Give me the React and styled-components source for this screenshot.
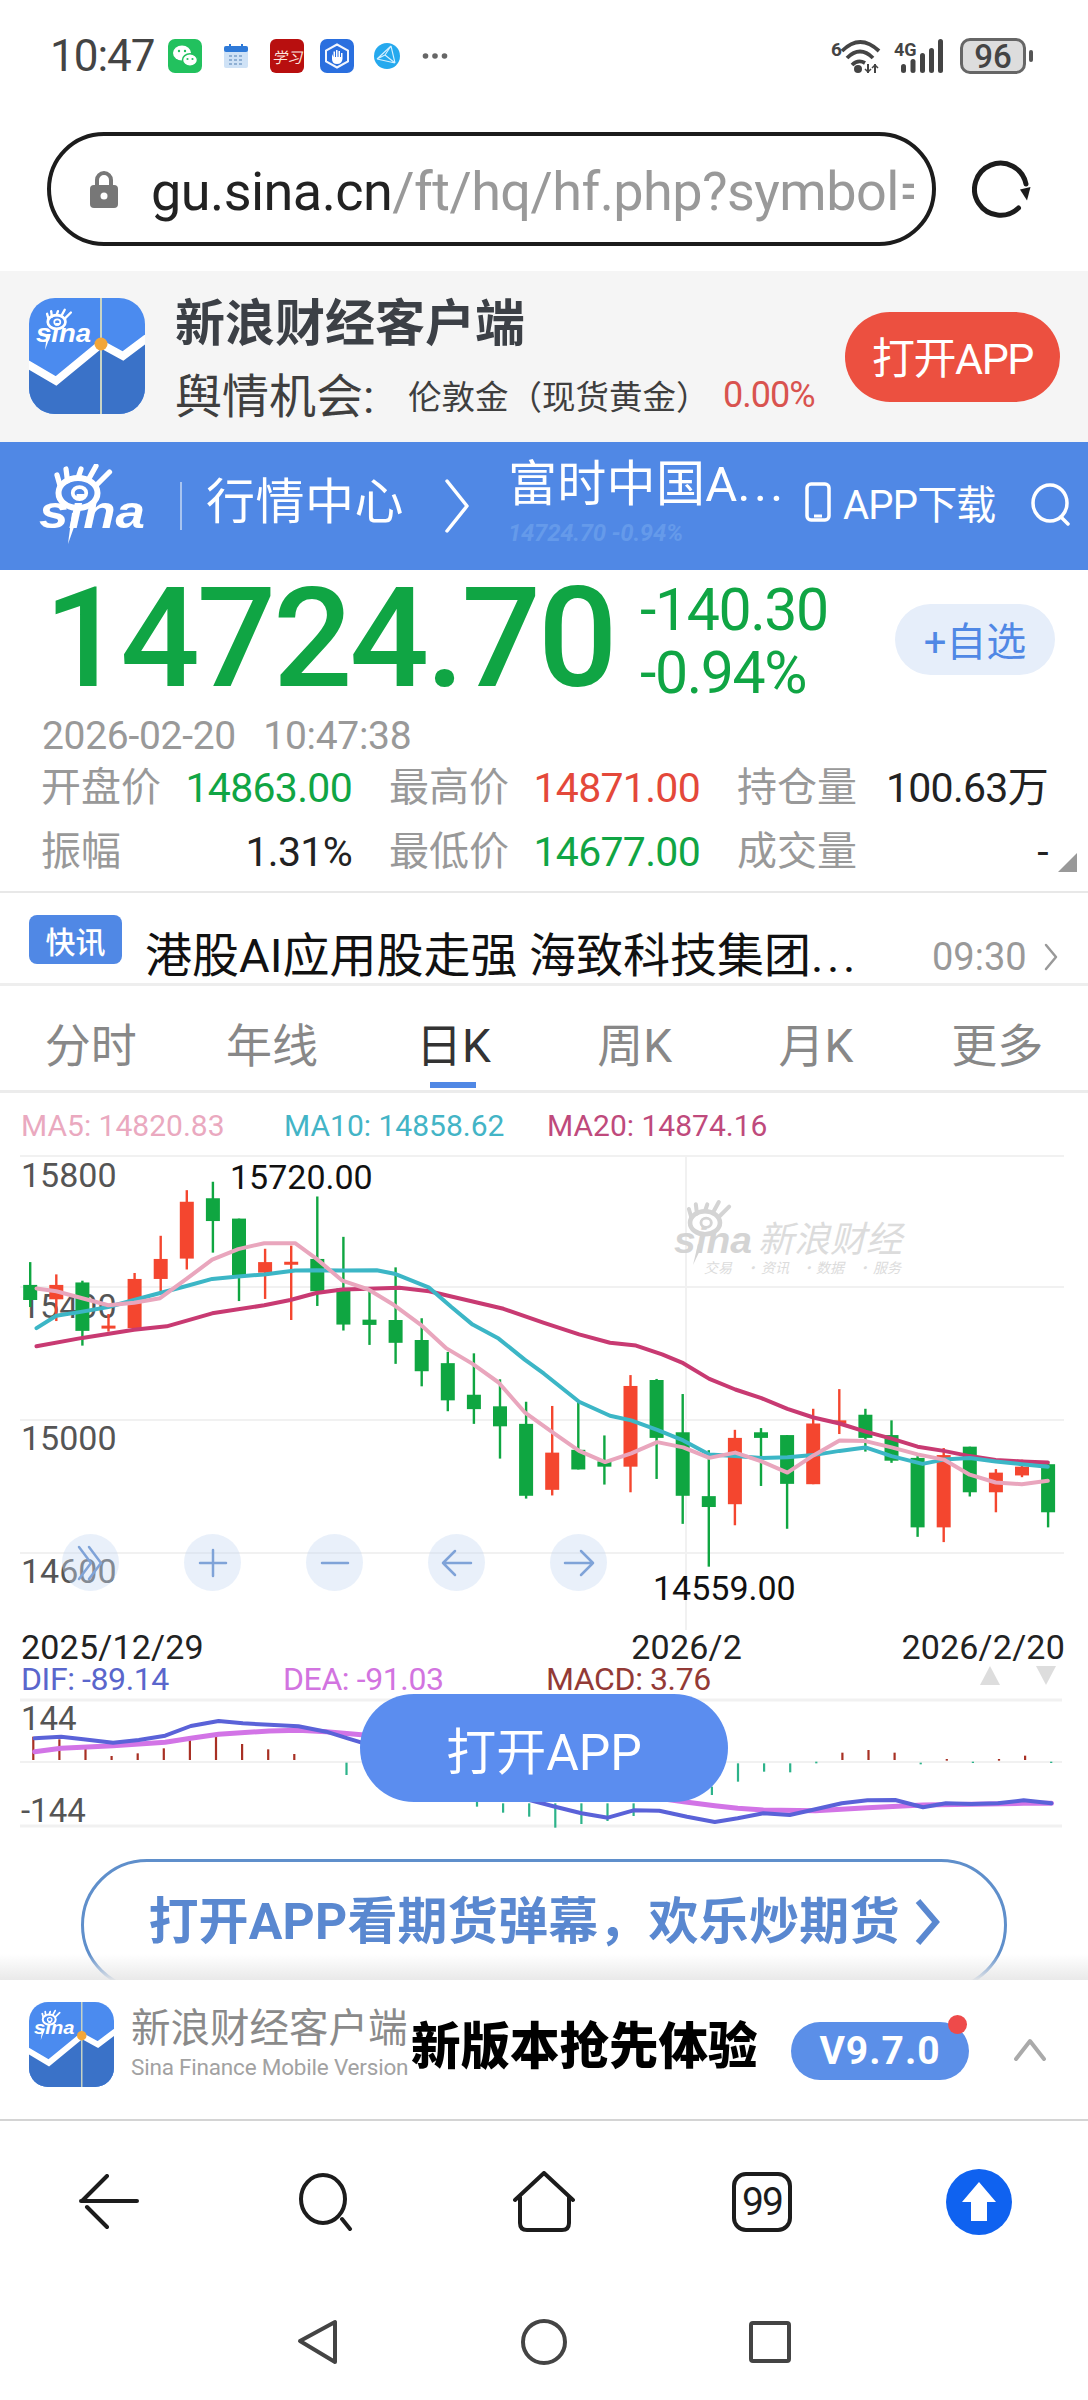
import React from "react";
import styled, { createGlobalStyle } from "styled-components";

const FONT = `Roboto, "Noto Sans CJK SC", "Noto Sans", sans-serif`;
const GREEN = "#10a544";
const RED = "#e4483a";
const BLUE = "#5088e5";

const Global = createGlobalStyle`
  html, body { margin: 0; padding: 0; background: #fff; }
  body { font-family: ${FONT}; }
  * { box-sizing: border-box; }
`;

const Page = styled.div`
  width: 1088px; height: 2400px; overflow: hidden; background: #fff;
  display: flex; flex-direction: column; color: #222;
`;

/* status bar */
const StatusBar = styled.div`
  height: 110px; display: flex; align-items: center; padding: 2px 62px 0 50px; flex: none;
`;
const Clock = styled.div`
  font-size: 44px; letter-spacing: -1px; color: #444; width: 118px; line-height: 1;
`;
const StatusIcons = styled.div`display: flex; align-items: center; gap: 16px;`;
const StatusRight = styled.div`margin-left: auto; display: flex; align-items: center; gap: 13px;`;
const Battery = styled.div`
  width: 66px; height: 36px; border: 3px solid #666; border-radius: 10px; background: #ddd; margin-left: 3px;
  font-size: 33px; line-height: 1; font-weight: 500; color: #444; display: flex; align-items: center; justify-content: center;
  position: relative;
  &::after { content: ""; position: absolute; right: -10px; top: 9px; width: 4px; height: 12px; border-radius: 2px; background: #555; }
`;

/* url */
const UrlRow = styled.div`
  height: 161px; padding: 22px 0 0 47px; display: flex; align-items: flex-start; flex: none;
`;
const UrlBox = styled.div`
  width: 889px; height: 114px; border: 4px solid #1c1c1c; border-radius: 57px; padding: 0 18px 0 39px;
  display: flex; align-items: center; gap: 33px; overflow: hidden;
`;
const UrlText = styled.div`
  font-size: 54px; letter-spacing: -0.55px; white-space: nowrap; overflow: hidden; color: #222; flex: 1; line-height: 76px; padding-top: 6px;
  span { color: #999; }
`;
const Reload = styled.div`margin: 26px 0 0 36px; width: 60px; height: 60px;`;

/* banner */
const Banner = styled.div`
  height: 171px; background: #f5f5f5; flex: none; display: flex; padding: 27px 28px 0 29px; 
`;
const BannerText = styled.div`margin-left: 30px; display: flex; flex-direction: column; flex: 1;`;
const BannerTitle = styled.div`font-size: 50px; font-weight: 700; line-height: 52px; color: #3c4046;`;
const BannerSub = styled.div`display: flex; align-items: center; margin-top: 15px; height: 54px; color: #3f3f3f;`;
const SubLead = styled.span`font-size: 47px; width: 233px; white-space: nowrap;`;
const SubGold = styled.span`font-size: 33.5px; width: 315px; white-space: nowrap; margin-top: 5px;`;
const SubPct = styled.span`font-size: 36px; color: #d9534f; letter-spacing: -1px; margin-top: 5px;`;
const OpenBtn = styled.div`
  width: 215px; height: 90px; margin-top: 14px; border-radius: 45px; background: #ec5040; color: #fff;
  font-size: 43px; display: flex; align-items: center; justify-content: center; letter-spacing: -1.5px; padding-bottom: 4px;
`;

/* nav */
const Nav = styled.div`
  height: 128px; background: ${BLUE}; flex: none; display: flex; align-items: center; color: #fff; padding-left: 38px; position: relative;
`;
const NavDivider = styled.div`width: 2px; height: 48px; background: #a8c4f0; margin: 0 24px 0 34px;`;
const NavSection = styled.div`font-size: 49px; width: 238px; line-height: 1; letter-spacing: 0.5px; margin-bottom: 8px;`;
const NavTitleBlock = styled.div`margin-left: 38px; width: 297px; display: flex; flex-direction: column; align-self: flex-start; padding-top: 12px;`;
const NavTitle = styled.div`font-size: 49px; line-height: 62px; white-space: nowrap; letter-spacing: 0.3px;`;
const Dots = styled.span`letter-spacing: 3.5px;`;
const NavFaint = styled.div`font-size: 24px; line-height: 26px; color: #659aea; font-style: italic; font-weight: 700; margin-top: 4px; letter-spacing: -0.3px; white-space: nowrap;`;
const NavDown = styled.div`display: flex; align-items: center; gap: 12px; font-size: 40px; letter-spacing: -0.8px; margin-bottom: 8px; white-space: nowrap;`;
const NavSearch = styled.div`margin-left: 34px;`;

/* quote */
const Quote = styled.div`height: 323px; flex: none; border-bottom: 2px solid #e8e8e8;`;
const PriceRow = styled.div`height: 146px; display: flex; align-items: center; padding: 0 33px 10px 44px;`;
const BigPrice = styled.div`font-size: 140px; line-height: 1; font-weight: 500; color: ${GREEN}; letter-spacing: -3.2px; width: 596px; white-space: nowrap;`;
const Change = styled.div`font-size: 59px; color: ${GREEN}; line-height: 63px; letter-spacing: -1.4px; white-space: nowrap; padding-top: 6px;`;
const Follow = styled.div`
  margin-left: auto; width: 160px; height: 71px; border-radius: 36px; background: #e6eefa; color: ${BLUE};
  font-size: 40px; display: flex; align-items: center; justify-content: center; margin-top: 2px;
`;
const DateLine = styled.div`height: 40px; padding-left: 42px; font-size: 39px; line-height: 40px; color: #999; letter-spacing: -0.3px; word-spacing: 18px;`;
const StatGrid = styled.div`display: grid; grid-template-columns: repeat(3, 311px); column-gap: 37px; grid-auto-rows: 64px; padding-left: 41px; position: relative;`;
const Stat = styled.div`display: flex; align-items: center; justify-content: space-between; font-size: 40px; line-height: 48px; color: #999; white-space: nowrap;`;
const StatVal = styled.span`font-size: 41px; letter-spacing: -0.7px; color: ${(p) => p.$c || "#222"};`;
const Corner = styled.div`
  position: absolute; right: 11px; bottom: 12px; width: 0; height: 0;
  border-left: 19px solid transparent; border-bottom: 19px solid #999;
`;

/* news */
const News = styled.div`height: 93px; flex: none; display: flex; padding: 22px 25px 0 29px; border-bottom: 3px solid #eee;`;
const NewsBadge = styled.div`width: 93px; height: 49px; border-radius: 8px; background: ${BLUE}; color: #fff; font-size: 30px; font-weight: 500; display: flex; align-items: center; justify-content: center; flex: none;`;
const NewsText = styled.div`margin: 11px 0 0 23px; font-size: 47px; line-height: 60px; color: #111; width: 787px; white-space: nowrap;`;
const NewsTime = styled.div`margin-top: 12px; font-size: 38px; line-height: 60px; color: #999;`;
const NewsMore = styled.div`margin: 28px 0 0 17px;`;

/* tabs */
const Tabs = styled.div`height: 107px; flex: none; display: grid; grid-template-columns: repeat(6, 1fr); border-bottom: 3px solid #ececec;`;
const Tab = styled.div`
  display: flex; align-items: center; justify-content: center; padding-top: 8px; font-size: 46px; color: ${(p) => (p.$on ? "#333" : "#888")}; position: relative;
  ${(p) => p.$on && `&::after { content: ""; position: absolute; left: 50%; margin-left: -23px; bottom: 2px; width: 46px; height: 6px; background: ${BLUE}; }`}
`;

/* chart */
const ChartArea = styled.div`position: relative; flex: none; height: 747px;`;
const MaLegend = styled.div`height: 57px; display: flex; padding: 16px 0 0 21px; font-size: 30px; line-height: 34px; white-space: nowrap;`;
const MaItem = styled.span`width: ${(p) => p.$w}px; color: ${(p) => p.$c};`;
const ChartSvg = styled.svg`display: block;`;
const DateAxis = styled.div`height: 35px; display: flex; justify-content: space-between; padding: 0 23px 0 21px; font-size: 34px; line-height: 35px; color: #222; letter-spacing: 0.2px; position: relative;`;
const MidDate = styled.span`margin-left: 268px;`;
const MacdLegend = styled.div`height: 30px; display: flex; align-items: center; padding-left: 21px; font-size: 32px; line-height: 30px; white-space: nowrap; letter-spacing: -0.4px; position: relative; margin-top: -1px; margin-bottom: 1px;`;
const Arrows = styled.div`position: absolute; right: 32px; top: 2px; display: flex; gap: 36px;`;
const Tri = styled.div`
  width: 0; height: 0; border-left: 10px solid transparent; border-right: 10px solid transparent;
  ${(p) => (p.$down ? "border-top: 19px solid #ddd;" : "border-bottom: 19px solid #ddd;")}
`;
const Controls = styled.div`position: absolute; left: 62px; top: 441px; display: flex; gap: 65px;`;
const Control = styled.div`width: 57px; height: 57px; border-radius: 50%; background: rgba(200, 217, 242, 0.4); display: flex; align-items: center; justify-content: center;`;
const FloatBtn = styled.div`
  position: absolute; left: 360px; top: 601px; width: 368px; height: 108px; border-radius: 54px; background: #5b8def;
  color: #fff; font-size: 50px; display: flex; align-items: center; justify-content: center;
`;

/* cta */
const CtaZone = styled.div`
  height: 140px; flex: none; overflow: hidden; position: relative; padding: 19px 0 0 81px;
  &::after { content: ""; position: absolute; left: 0; right: 0; bottom: 0; height: 26px; background: linear-gradient(to bottom, rgba(235,235,235,0), rgba(232,232,232,0.95)); }
`;
const CtaPill = styled.div`
  width: 926px; height: 132px; border: 3px solid #5f8fcb; border-radius: 66px; color: #5a88d0; font-size: 50px; line-height: 72px; font-weight: 700;
  display: flex; align-items: flex-start; justify-content: center; padding-top: 24px; gap: 14px; letter-spacing: 0.2px; white-space: nowrap;
`;

/* app bar */
const AppBar = styled.div`height: 141px; flex: none; border-bottom: 2px solid #d4d4d4; display: flex; padding: 22px 0 0 29px; position: relative;`;
const AppNames = styled.div`margin-left: 17px; width: 280px; display: flex; flex-direction: column; white-space: nowrap;`;
const AppCn = styled.div`font-size: 39.5px; line-height: 54px; color: #8a8a8a;`;
const AppEn = styled.div`font-size: 22.5px; line-height: 24px; color: #a2a2a2; margin-top: -1px; letter-spacing: -0.2px;`;
const AppPromo = styled.div`font-size: 49.5px; font-weight: 900; color: #000; line-height: 56px; margin-top: 17px; width: 380px; white-space: nowrap;`;
const Version = styled.div`
  width: 178px; height: 58px; border-radius: 29px; background: #5b8fe8; color: #fff; font-size: 39px; font-weight: 700; letter-spacing: 1px;
  display: flex; align-items: center; justify-content: center; margin-top: 20px; position: relative;
  &::after { content: ""; position: absolute; right: 2px; top: -7px; width: 19px; height: 19px; border-radius: 50%; background: #ee4a4a; }
`;
const Caret = styled.div`margin: 36px 0 0 44px;`;

/* bottom */
const BottomNav = styled.div`height: 162px; flex: none; display: grid; grid-template-columns: repeat(5, 1fr); place-items: center;`;
const SysNav = styled.div`height: 117px; flex: none; display: grid; grid-template-columns: repeat(3, 226px); justify-content: center; place-items: center;`;

const Y1 = (y) => 1100 + y / 2.85;
const XL = (x) => x / 2.88;
const XR = (x) => 544 + x / 2.88;
const candleX = (i) => 30.2 + 26.1 * i;

const candles = [
  ["g",462,590,527,570],["r",497,630,527,568],["g",515,700,520,658],["r",610,660,643,650],["r",493,655,510,650],
  ["r",387,548,453,510],["r",257,483,290,452],["g",233,435,280,345],["g",338,573,338,500],["r",424,567,462,492],
  ["r",415,627,461,469],["g",275,587,453,545],["g",390,657,537,640],["g",540,698,626,641],["g",477,752,627,692],
  ["g",622,816,684,773],["g",718,887,750,856],["g",722,923,840,881],["g",796,1022,873,930],["g",860,1136,923,1128],
  ["r",872,1127,1005,1111],["g",855,1053,997,1053],["g",956,1096,1030,1045],["r",784,1118,815,1045],["g",795,1080,798,963],
  ["g",838,1208,947,1128],["g",998,1330,1129,1160],["r",940,1212,963,1152],["g",935,1100,947,963],["g",955,1222,955,1094],
  ["r",880,1095,922,1095],["r",824,952,913,922],["g",880,1002,897,963],["g",913,1034,955,1028],["g",1015,1245,1020,1218],
  ["r",992,1260,1012,1218],["g",988,1130,988,1118],["r",1052,1175,1062,1118],["r",1025,1075,1045,1070],["g",1030,1218,1038,1175],
];

const line = (left, right) =>
  [...left.map(([x, y]) => `${XL(x).toFixed(1)},${Y1(y).toFixed(1)}`), ...right.map(([x, y]) => `${XR(x).toFixed(1)},${Y1(y).toFixed(1)}`)].join(" ");

const ma5 = line(
  [[105,537],[162,545],[237,565],[312,585],[386,578],[461,565],[537,510],[611,455],[686,425],[761,408],[850,408],[911,452],[986,515],[1061,540],[1136,585],[1211,640],[1286,708],[1361,752],[1436,805],[1511,890]],
  [[26,948],[101,1000],[176,1032],[251,1007],[326,975],[401,990],[476,1020],[551,1005],[626,1030],[701,1062],[776,1013],[851,970],[926,972],[1001,990],[1076,1010],[1151,1025],[1226,1068],[1301,1090],[1376,1095],[1451,1085]]
);
const ma10 = line(
  [[105,650],[162,615],[237,603],[312,590],[386,570],[461,550],[537,530],[611,510],[686,503],[761,497],[850,486],[911,485],[986,486],[1085,485],[1136,495],[1236,535],[1300,590],[1361,640],[1436,680],[1511,740]],
  [[0,780],[101,860],[190,900],[251,913],[326,940],[401,970],[476,1010],[551,1015],[626,1020],[701,1018],[776,1012],[851,1000],[926,990],[1001,1015],[1090,1037],[1151,1025],[1226,1020],[1301,1030],[1376,1038],[1451,1045]]
);
const ma20 = line(
  [[105,702],[237,678],[386,655],[480,645],[611,608],[761,585],[836,570],[911,550],[986,540],[1061,538],[1150,535],[1236,545],[1300,560],[1450,595]],
  [[0,635],[101,668],[190,692],[265,700],[340,725],[401,750],[476,795],[551,825],[626,850],[701,880],[776,905],[851,922],[926,945],[1001,965],[1076,988],[1151,1000],[1226,1015],[1301,1026],[1376,1030],[1451,1033]]
);

const bars = [
  [0,"r",290,360],[1,"r",298,360],[2,"r",325,360],[3,"r",348,360],[4,"r",340,360],[5,"r",325,360],[6,"r",290,360],[7,"r",283,360],[8,"r",312,360],[9,"r",328,360],[10,"r",342,360],
  [12,"g",368,405],[17,"g",480,500],[18,"g",490,518],[19,"g",490,530],[20,"g",490,563],[21,"g",490,552],[22,"g",490,543],[23,"g",490,528],
  [26,"g",440,465],[27,"g",370,425],[28,"g",370,395],[29,"g",370,397],[30,"g",365,370],[31,"r",338,360],[32,"r",330,360],[33,"r",338,360],[34,"g",368,373],[35,"r",357,362],[36,"g",365,369],[37,"r",357,362],[38,"r",347,360],[39,"g",365,369],
];
const mLine = (pts) => pts.map(([x, y]) => `${(x / 1.441).toFixed(1)},${(1640 + y / 3).toFixed(1)}`).join(" ");
const dif = mLine([[50,295],[88,290],[120,298],[163,308],[200,300],[238,287],[275,258],[315,243],[350,250],[388,254],[430,259],[470,275],[501,295],[525,310],[650,420],[763,480],[800,500],[838,520],[876,533],[913,511],[950,512],[990,530],[1030,546],[1063,535],[1100,520],[1138,525],[1175,508],[1213,490],[1250,481],[1290,480],[1330,502],[1363,490],[1400,492],[1438,490],[1475,481],[1515,490]]);
const dea = mLine([[50,335],[88,325],[163,317],[238,307],[275,295],[315,283],[388,273],[430,271],[470,275],[525,285],[763,420],[985,485],[1030,497],[1063,505],[1100,510],[1175,512],[1250,503],[1330,495],[1400,493],[1475,490],[1515,490]]);

const SinaEye = ({ x, y, s, c }) => (
  <g transform={`translate(${x} ${y}) scale(${s})`} fill="none" stroke={c} strokeLinecap="round">
    <ellipse cx="20" cy="25" rx="13" ry="10" strokeWidth="4" />
    <ellipse cx="21" cy="25" rx="4.500" ry="4" strokeWidth="2.500" />
    <path d="M8 20 6 13M13 17 12 9M20 15 22 9M27 16 32 7M32 20 41 11" strokeWidth="3.500" />
  </g>
);

const SinaLogo = () => (
  <svg width="108" height="84" viewBox="0 0 108 84">
    <SinaEye x={10} y={-8.5} s={1.5} c="#fff" />
    <text x="1" y="64" textLength="106" lengthAdjust="spacingAndGlyphs" fontFamily="Liberation Sans" fontStyle="italic" fontWeight="700" fontSize="46" fill="#fff">sina</text>
    <path d="M34 49H41L30 80Z" fill="#fff" />
  </svg>
);

const AppIcon = ({ size }) => (
  <svg width={size} height={size} viewBox="0 0 116 116" style={{ flex: "none" }}>
    <defs>
      <clipPath id={`ic${size}`}><rect width="116" height="116" rx="26" /></clipPath>
    </defs>
    <g clipPath={`url(#ic${size})`}>
      <rect width="116" height="116" fill="#4b8bef" />
      <polygon points="0,67 27,83 72,46 94,57 116,40 116,116 0,116" fill="#3a72c8" />
      <polyline points="-2,66 27,83 72,46 94,58 118,40" fill="none" stroke="#fff" strokeWidth="8" />
      <rect x="71" y="0" width="2" height="116" fill="#c9d4c4" />
      <circle cx="72" cy="46" r="6.500" fill="#f2a63a" />
      <SinaEye x={14} y={7} s={0.68} c="#fff" />
      <text x="7" y="44" textLength="55" lengthAdjust="spacingAndGlyphs" fontFamily="Liberation Sans" fontStyle="italic" fontWeight="700" fontSize="25" fill="#fff">sina</text>
      <path d="M18 36H22L16 52Z" fill="#fff" />
    </g>
  </svg>
);

const Stroke = ({ w, h, sw = 4, c = "#222", children }) => (
  <svg width={w} height={h} viewBox={`0 0 ${w} ${h}`} fill="none" stroke={c} strokeWidth={sw} strokeLinecap="round" strokeLinejoin="round">
    {children}
  </svg>
);

const watermarkWords = [["交易", 704], ["·", 745], ["资讯", 761], ["·", 801], ["数据", 816], ["·", 857], ["服务", 873]];

export default function App() {
  return (
    <Page>
      <Global />
      <StatusBar>
        <Clock>10:47</Clock>
        <StatusIcons>
          <svg width="34" height="34" viewBox="0 0 34 34">
            <rect width="34" height="34" rx="7" fill="#22c15e" />
            <ellipse cx="14" cy="14" rx="9" ry="7.500" fill="#fff" />
            <ellipse cx="22" cy="21" rx="7.500" ry="6.200" fill="#fff" stroke="#22c15e" strokeWidth="1.500" />
            <circle cx="11" cy="12" r="1.200" fill="#22c15e" /><circle cx="17" cy="12" r="1.200" fill="#22c15e" />
            <circle cx="19.500" cy="20" r="1.100" fill="#22c15e" /><circle cx="24.500" cy="20" r="1.100" fill="#22c15e" />
          </svg>
          <svg width="24" height="24" viewBox="0 0 24 24" style={{ margin: "0 6px 0 6px" }}>
            <rect y="2" width="24" height="22" rx="2" fill="#cfe2f6" />
            <rect y="2" width="24" height="6" rx="2" fill="#2f7ad8" />
            <path d="M6 0v5M18 0v5" stroke="#2f7ad8" strokeWidth="2" />
            <path d="M5 12h14M5 16h14M5 20h14" stroke="#8fb0d4" strokeWidth="2" strokeDasharray="3 2" />
          </svg>
          <svg width="34" height="34" viewBox="0 0 34 34">
            <rect width="34" height="34" rx="6" fill="#b80f0f" />
            <text x="17" y="24" fontSize="15" fontStyle="italic" fontFamily="Noto Sans CJK SC" textAnchor="middle" fill="#fbe6df">学习</text>
          </svg>
          <svg width="34" height="34" viewBox="0 0 34 34">
            <rect width="34" height="34" rx="7" fill="#2a6fdf" />
            <path d="M17 5.500 28 11.500V22.500L17 28.500 6 22.500V11.500Z" fill="none" stroke="#f2f6fe" strokeWidth="2" />
            <path d="M12 15V20Q12 25 17 25Q22 25 22.500 20V14H21V18H20V12H18.500V18H17.500V11H16V18H15V12.500H13.500V18Z" fill="#fff" />
          </svg>
          <svg width="26" height="26" viewBox="0 0 26 26" style={{ margin: "0 4px" }}>
            <circle cx="13" cy="13" r="13" fill="#25a9ee" />
            <path d="M3 16 17 3M17 3 21 20M3 16 21 20M11 12 17 3M11 12 21 20M11 12 3 16" stroke="#d6f0ff" strokeWidth="1.100" fill="none" />
          </svg>
          <svg width="26" height="8" viewBox="0 0 26 8" style={{ marginLeft: 2 }}>
            <circle cx="3.500" cy="4" r="2.800" fill="#666" /><circle cx="13" cy="4" r="2.800" fill="#666" /><circle cx="22.500" cy="4" r="2.800" fill="#666" />
          </svg>
        </StatusIcons>
        <StatusRight>
          <svg width="50" height="36" viewBox="0 0 50 36">
            <text x="0" y="18" fontSize="19" fontWeight="700" fontFamily="Roboto" fill="#444">6</text>
            <g fill="none" stroke="#444" strokeWidth="3.800">
              <path d="M11 13Q29 -5 48 13" /><path d="M16 20Q29 7 42 20" /><path d="M21 27Q27 21 34 25" />
            </g>
            <circle cx="27" cy="31" r="4" fill="#444" />
            <path d="M37 26v9M44 26v9" stroke="#444" strokeWidth="2" />
            <path d="M34 31l3 3 3-3M41 30l3-3 3 3" fill="none" stroke="#444" strokeWidth="1.500" />
          </svg>
          <svg width="50" height="36" viewBox="0 0 50 36">
            <text x="0" y="18" fontSize="18" fontWeight="700" fontFamily="Roboto" fill="#444">4G</text>
            <g fill="#444">
              <rect x="7" y="26" width="5" height="9" rx="2.500" /><rect x="16.500" y="21" width="5" height="14" rx="2.500" />
              <rect x="26" y="15" width="5" height="20" rx="2.500" /><rect x="35" y="10" width="5" height="25" rx="2.500" />
              <rect x="44" y="1" width="5" height="34" rx="2.500" />
            </g>
          </svg>
          <Battery>96</Battery>
        </StatusRight>
      </StatusBar>

      <UrlRow>
        <UrlBox>
          <svg width="28" height="38" viewBox="0 0 28 38" style={{ flex: "none" }}>
            <path d="M7 17V10a7 7 0 0 1 14 0v7" fill="none" stroke="#777" strokeWidth="4" />
            <rect y="15" width="28" height="23" rx="4" fill="#777" />
            <circle cx="14" cy="26" r="3.500" fill="#fff" />
          </svg>
          <UrlText>gu.sina.cn<span>/ft/hq/hf.php?symbol=</span></UrlText>
        </UrlBox>
        <Reload>
          <svg width="60" height="60" viewBox="0 0 60 60">
            <path d="M46.500 50A26 26 0 1 1 54 26" fill="none" stroke="#1c1c1c" strokeWidth="5" strokeLinecap="round" />
            <path d="M48 31.500 58.500 29 55 42.500Z" fill="#1c1c1c" />
          </svg>
        </Reload>
      </UrlRow>

      <Banner>
        <AppIcon size={116} />
        <BannerText>
          <BannerTitle>新浪财经客户端</BannerTitle>
          <BannerSub>
            <SubLead>舆情机会:</SubLead>
            <SubGold>伦敦金（现货黄金）</SubGold>
            <SubPct>0.00%</SubPct>
          </BannerSub>
        </BannerText>
        <OpenBtn>打开APP</OpenBtn>
      </Banner>

      <Nav>
        <SinaLogo />
        <NavDivider />
        <NavSection>行情中心</NavSection>
        <Stroke w={26} h={56} sw={3.500} c="#fff"><path d="M3 3 23 28 3 53" /></Stroke>
        <NavTitleBlock>
          <NavTitle>富时中国A<Dots>...</Dots></NavTitle>
          <NavFaint>14724.70 -0.94%</NavFaint>
        </NavTitleBlock>
        <NavDown>
          <svg width="26" height="40" viewBox="0 0 26 40">
            <rect x="2" y="2" width="22" height="36" rx="4" fill="none" stroke="#fff" strokeWidth="3.500" />
            <path d="M9 34h8" stroke="#fff" strokeWidth="3" />
          </svg>
          APP下载
        </NavDown>
        <NavSearch>
          <Stroke w={42} h={44} sw={3.500} c="#fff">
            <ellipse cx="20" cy="21" rx="17" ry="18" /><path d="M31 35 38 42" />
          </Stroke>
        </NavSearch>
      </Nav>

      <Quote>
        <PriceRow>
          <BigPrice>14724.70</BigPrice>
          <Change>-140.30<br />-0.94%</Change>
          <Follow>+自选</Follow>
        </PriceRow>
        <DateLine>2026-02-20 10:47:38</DateLine>
        <StatGrid>
          <Stat>开盘价<StatVal $c={GREEN}>14863.00</StatVal></Stat>
          <Stat>最高价<StatVal $c={RED}>14871.00</StatVal></Stat>
          <Stat>持仓量<StatVal>100.63万</StatVal></Stat>
          <Stat>振幅<StatVal>1.31%</StatVal></Stat>
          <Stat>最低价<StatVal $c={GREEN}>14677.00</StatVal></Stat>
          <Stat>成交量<StatVal>-</StatVal></Stat>
          <Corner />
        </StatGrid>
      </Quote>

      <News>
        <NewsBadge>快讯</NewsBadge>
        <NewsText>港股AI应用股走强 海致科技集团<Dots>...</Dots></NewsText>
        <NewsTime>09:30</NewsTime>
        <NewsMore>
          <Stroke w={14} h={28} sw={2.500} c="#999"><path d="M2 2 12 14 2 26" /></Stroke>
        </NewsMore>
      </News>

      <Tabs>
        <Tab>分时</Tab>
        <Tab>年线</Tab>
        <Tab $on>日K</Tab>
        <Tab>周K</Tab>
        <Tab>月K</Tab>
        <Tab>更多</Tab>
      </Tabs>

      <ChartArea>
        <MaLegend>
          <MaItem $w={263} $c="#eaa9bf">MA5: 14820.83</MaItem>
          <MaItem $w={263} $c="#43b4c6">MA10: 14858.62</MaItem>
          <MaItem $w={230} $c="#bf4a7c">MA20: 14874.16</MaItem>
        </MaLegend>
        <ChartSvg width="1088" height="480" viewBox="0 1150 1088 480">
          <g stroke="#f1f1f1" strokeWidth="2">
            <path d="M20 1156H1064M20 1287H1064M20 1420H1064M20 1553H1064" />
            <path d="M686 1156V1630" />
          </g>
          <g fontFamily="Roboto" fontSize="34" fill="#555">
            <text x="21" y="1187">15800</text>
            <text x="21" y="1318">15400</text>
            <text x="21" y="1450">15000</text>
            <text x="21" y="1583">14600</text>
          </g>
          <g>
            <SinaEye x={682} y={1194} s={1.15} c="#d4d4d4" />
            <text x="674" y="1253" textLength="78" lengthAdjust="spacingAndGlyphs" fontFamily="Liberation Sans" fontStyle="italic" fontWeight="700" fontSize="36" fill="#d4d4d4">sina</text>
            <path d="M698 1244H703L693 1265Z" fill="#d4d4d4" />
            <text x="758" y="1252" fontFamily="Noto Sans CJK SC" fontStyle="italic" fontSize="36" fill="#dcdcdc">新浪财经</text>
            {watermarkWords.map(([t, x]) => (
              <text key={x} x={x} y="1273" fontFamily="Noto Sans CJK SC" fontStyle="italic" fontSize="14" fill="#dcdcdc">{t}</text>
            ))}
          </g>
          {candles.map(([c, hi, lo, top, bot], i) => {
            const x = candleX(i);
            const col = c === "g" ? "#0fa641" : "#f4462f";
            const h = Math.max((bot - top) / 2.85, 3);
            return (
              <g key={i}>
                <rect x={x - 1.2} y={Y1(hi)} width="2.4" height={(lo - hi) / 2.85} fill={col} />
                <rect x={x - 7} y={Y1(top)} width="14" height={h} fill={col} />
              </g>
            );
          })}
          <g fill="none" strokeWidth="4" strokeLinejoin="round" strokeLinecap="round">
            <polyline points={ma20} stroke="#c83a72" />
            <polyline points={ma10} stroke="#3cb6c6" />
            <polyline points={ma5} stroke="#e9a6bd" />
          </g>
          <g fontFamily="Roboto" fontSize="34" fill="#111">
            <text x="230" y="1189">15720.00</text>
            <text x="653" y="1600">14559.00</text>
          </g>
        </ChartSvg>
        <DateAxis><span>2025/12/29</span><MidDate>2026/2</MidDate><span>2026/2/20</span></DateAxis>
        <MacdLegend>
          <MaItem $w={262} $c="#5a66cc">DIF: -89.14</MaItem>
          <MaItem $w={263} $c="#d274e0">DEA: -91.03</MaItem>
          <MaItem $w={180} $c="#933a36">MACD: 3.76</MaItem>
          <Arrows><Tri /><Tri $down /></Arrows>
        </MacdLegend>
        <ChartSvg width="1088" height="145" viewBox="0 1695 1088 145">
          <g stroke="#f1f1f1" strokeWidth="3">
            <path d="M20 1700H1062M20 1826H1062" />
            <path d="M20 1762H1062" strokeWidth="2" />
          </g>
          <g fontFamily="Roboto" fontSize="33" fill="#555">
            <text x="21" y="1730">144</text>
            <text x="21" y="1822">-144</text>
          </g>
          {bars.map(([i, c, top, bot]) => (
            <rect key={i} x={candleX(i) + 2} y={1640 + top / 3} width="2.2" height={(bot - top) / 3} fill={c === "r" ? "#a83024" : "#2db38a"} />
          ))}
          <g fill="none" strokeLinejoin="round" strokeLinecap="round">
            <polyline points={dea} stroke="#d274e6" strokeWidth="5" />
            <polyline points={dif} stroke="#5a62d8" strokeWidth="4" />
          </g>
        </ChartSvg>
        <Controls>
          <Control>
            <Stroke w={28} h={40} sw={2.500} c="#7fa3d8"><path d="M2 4 14 20 2 36M12 4 24 20 12 36" /></Stroke>
          </Control>
          <Control>
            <Stroke w={30} h={30} sw={2.500} c="#7fa3d8"><path d="M15 2V28M2 15H28" /></Stroke>
          </Control>
          <Control>
            <Stroke w={30} h={30} sw={2.500} c="#7fa3d8"><path d="M2 15H28" /></Stroke>
          </Control>
          <Control>
            <Stroke w={32} h={30} sw={2.500} c="#7fa3d8"><path d="M30 15H2M14 3 2 15 14 27" /></Stroke>
          </Control>
          <Control>
            <Stroke w={32} h={30} sw={2.500} c="#7fa3d8"><path d="M2 15H30M18 3 30 15 18 27" /></Stroke>
          </Control>
        </Controls>
        <FloatBtn>打开APP</FloatBtn>
      </ChartArea>

      <CtaZone>
        <CtaPill>
          打开APP看期货弹幕，欢乐炒期货
          <svg width="26" height="48" viewBox="0 0 26 48" style={{ marginTop: 12 }}>
            <path d="M4 3 22 24 4 45" fill="none" stroke="#5a88d0" strokeWidth="6" />
          </svg>
        </CtaPill>
      </CtaZone>

      <AppBar>
        <AppIcon size={85} />
        <AppNames>
          <AppCn>新浪财经客户端</AppCn>
          <AppEn>Sina Finance Mobile Version</AppEn>
        </AppNames>
        <AppPromo>新版本抢先体验</AppPromo>
        <Version>V9.7.0</Version>
        <Caret>
          <Stroke w={34} h={24} sw={4} c="#aaa"><path d="M3 21 17 3 31 21" /></Stroke>
        </Caret>
      </AppBar>

      <BottomNav>
        <Stroke w={60} h={56} sw={4} c="#1c1c1c"><path d="M2 27H58M28 2 3 27M8 33 28 53" /></Stroke>
        <Stroke w={56} h={58} sw={4} c="#1c1c1c"><ellipse cx="25" cy="26" rx="22" ry="24" /><path d="M44 46 52 56" /></Stroke>
        <Stroke w={62} h={62} sw={4} c="#1c1c1c"><path d="M2 29 31 2 60 29M7 26V52Q7 59 14 59H49Q56 59 56 52V26" /></Stroke>
        <svg width="60" height="60" viewBox="0 0 60 60">
          <rect x="2" y="2" width="56" height="56" rx="12" fill="none" stroke="#1c1c1c" strokeWidth="4" />
          <text x="30" y="43" textAnchor="middle" fontFamily="Roboto" fontSize="39" letterSpacing="-2" fill="#1c1c1c">99</text>
        </svg>
        <svg width="66" height="66" viewBox="0 0 66 66">
          <circle cx="33" cy="33" r="33" fill="#0f62f0" />
          <path d="M33 13 50 33H41V52H25V33H16Z" fill="#fff" />
        </svg>
      </BottomNav>

      <SysNav>
        <Stroke w={42} h={46} sw={4} c="#444"><path d="M38 3V43L3 22Z" /></Stroke>
        <Stroke w={46} h={46} sw={4} c="#444"><circle cx="23" cy="23" r="21" /></Stroke>
        <Stroke w={42} h={42} sw={4} c="#444"><rect x="2" y="2" width="38" height="38" rx="2" /></Stroke>
      </SysNav>
    </Page>
  );
}
